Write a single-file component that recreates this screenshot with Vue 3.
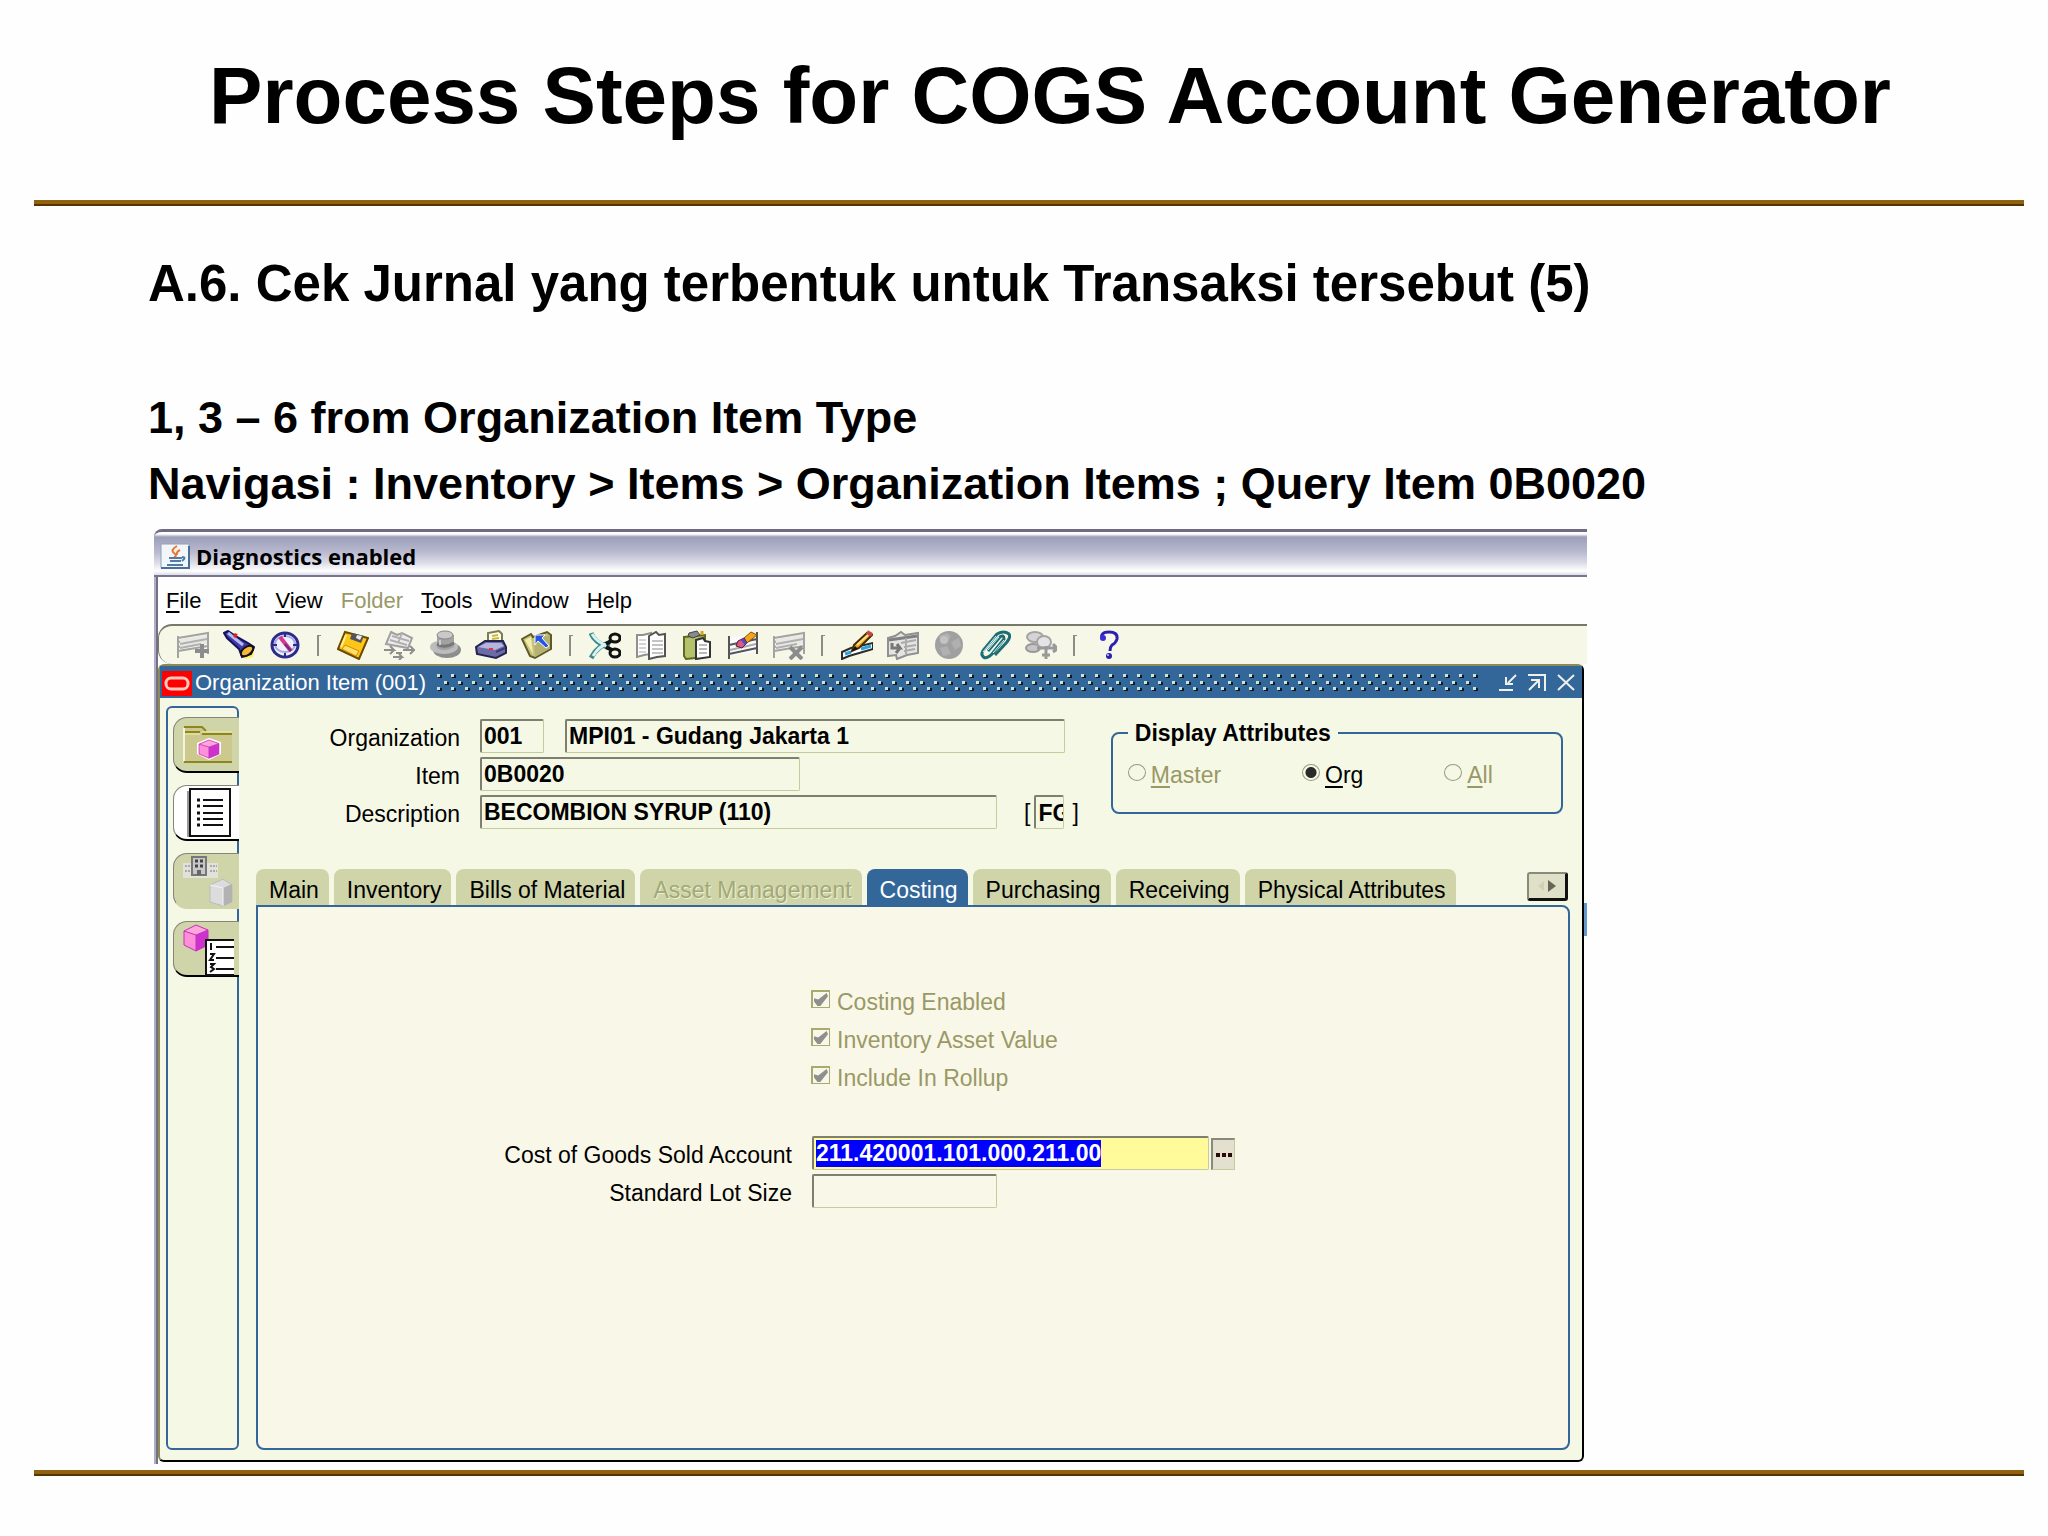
<script setup>
import { onMounted, ref } from 'vue'

const menus = [
  ['', 'F', 'ile'], ['', 'E', 'dit'], ['', 'V', 'iew'], ['Fo', 'l', 'der'],
  ['', 'T', 'ools'], ['', 'W', 'indow'], ['', 'H', 'elp'],
]

const grid = '<path d="M1 8 31 3V24M1 6V28M1 12 31 7M1 17 31 12M1 21 31 16" fill="none" stroke="#a3a3a3" stroke-width="2"/><path d="M3 9 30 5V14L3 19Z" fill="#e9e9e4"/><path d="M3 14 30 9M3 18 24 14" stroke="#b0b0b0" stroke-width="2"/>'

const icons = {
  new: grid + '<path d="M25 14V28M18 21H32" stroke="#8c8c8c" stroke-width="4"/>',
  find: '<path d="M20 24 31 20 30 27 22 29Z" fill="#fff04a"/><path d="M1 3 5 1 14 7 25 13 31 17 28 24 19 27 16 19 4 8Z" fill="#3c3ca4" stroke="#12125e" stroke-width="2"/><path d="M5 3 20 15" stroke="#b9b9f2" stroke-width="3"/><path d="M11 5 14 6" stroke="#e02020" stroke-width="4"/><ellipse cx="24" cy="21" rx="7" ry="4" transform="rotate(-35 24 21)" fill="#f6b83a" stroke="#111" stroke-width="2"/>',
  navigator: '<ellipse cx="16" cy="15" rx="13" ry="12" fill="#f1f1fb" stroke="#2b2b8c" stroke-width="3"/><ellipse cx="16" cy="14" rx="10" ry="8" fill="none" stroke="#a8a8e6" stroke-width="2"/><path d="M16 3V7M16 23V27M3 15H8M24 15H29" stroke="#2b2b8c" stroke-width="2"/><path d="M11 7 22 21" stroke="#d8388c" stroke-width="4"/><path d="M16 14 22 21" stroke="#6a2c7c" stroke-width="2"/>',
  save: '<path d="M8 2 31 8 22 29 1 19Z" fill="#ffc61a" stroke="#6b4a00" stroke-width="2"/><path d="M15 3 27 6 24 13 13 9Z" fill="#555"/><path d="M20 5 25 6 23 10 19 8Z" fill="#eee"/><path d="M8 15 22 21 19 26 5 19Z" fill="#ffe169" stroke="#d88a00"/><path d="M9 5 4 17" stroke="#fff08a" stroke-width="2"/>',
  next: '<path d="M8 2 14 5 19 3 29 8 25 18 3 14Z" fill="#ececec" stroke="#a0a0a0" stroke-width="2"/><path d="M9 6 26 11M7 10 24 15M19 3 15 13" fill="none" stroke="#b0b0b0" stroke-width="2"/><path d="M1 20H11L7 16M11 20 7 24M13 23H19M20 20H31L27 16M31 20 27 24M10 27H19L16 24M19 27 16 30" fill="none" stroke="#8e8e8e" stroke-width="2"/>',
  hat: '<ellipse cx="18" cy="20" rx="14" ry="8" fill="#8d8d8d"/><ellipse cx="15" cy="17" rx="14" ry="7" fill="#bcbcbc"/><path d="M8 5V18Q16 23 25 17V5Z" fill="#a2a2a2"/><ellipse cx="16" cy="5" rx="8" ry="4" fill="#c9c9c9" stroke="#888"/><path d="M8 14Q16 19 25 13" fill="none" stroke="#777" stroke-width="3"/><path d="M11 10V15" stroke="#ccc" stroke-width="2"/>',
  print: '<path d="M13 13V3L24 1 27 4V14Z" fill="#fffef0" stroke="#7b7b50" stroke-width="2"/><path d="M17 6 23 5M17 9 24 8" stroke="#c6b93c" stroke-width="2"/><path d="M1 17 10 11H28L31 17V23L21 28 2 24Z" fill="#6b6ba6" stroke="#23234e" stroke-width="2"/><path d="M3 17 11 13H26L29 16 20 20Z" fill="#b4b4de"/><path d="M14 19H18" stroke="#e33" stroke-width="2"/><path d="M21 22 30 18" stroke="#3b3b77" stroke-width="2"/>',
  close: '<path d="M1 9 10 4 12 7 26 2 30 5V19L14 28 9 26Z" fill="#c9c47b" stroke="#5e5a28" stroke-width="2"/><path d="M13 10 29 5V18L14 27Z" fill="#b5b172"/><path d="M4 10 10 7 12 24Z" fill="#efecae"/><path d="M14 5H24L21 8 28 16 25 18 17 11 14 15Z" fill="#2455e6" stroke="#fff"/>',
  cut: '<path d="M2 3Q5 12 20 18M2 28Q10 14 21 13" fill="none" stroke="#3a8a8a" stroke-width="5"/><path d="M3 4Q8 12 18 16M4 26Q10 16 18 14" fill="none" stroke="#d9f2f0" stroke-width="3"/><ellipse cx="26" cy="8" rx="5" ry="4" fill="none" stroke="#111" stroke-width="3"/><ellipse cx="26" cy="23" rx="5" ry="4" fill="none" stroke="#111" stroke-width="3"/><path d="M17 14 22 11M17 17 23 20" stroke="#111" stroke-width="4"/>',
  copy: '<path d="M2 5H8L16 3V24L9 25 2 27Z" fill="#fff" stroke="#909090" stroke-width="2"/><path d="M4 10H11M4 14H11M4 18H11M4 22H11" stroke="#aaa" stroke-width="1"/><path d="M14 6 21 2 24 5 30 4V26L22 27 14 29Z" fill="#fff" stroke="#555" stroke-width="2"/><path d="M17 11H28M17 15H28M17 19H28M17 23H28" stroke="#888"/>',
  paste: '<path d="M3 7 24 5V27L5 29 3 26Z" fill="#b5c26c" stroke="#5e6a20" stroke-width="2"/><path d="M8 3 16 1 19 5 12 8 7 6Z" fill="#8a8a8a" stroke="#444"/><path d="M21 1V5" stroke="#e0a020" stroke-width="3"/><path d="M15 10 22 8 24 11 29 12V27L15 29Z" fill="#fff" stroke="#333" stroke-width="2"/><path d="M18 15H26M18 19H26M18 23H26" stroke="#777"/>',
  clear: '<path d="M2 8 30 3V22L2 26Z" fill="#fafafa"/><path d="M2 6V29M30 2V24M2 15 30 9M2 24 30 18" stroke="#555" stroke-width="2"/><path d="M3 20 29 14" stroke="#aaa" stroke-width="2"/><path d="M17 8 24 2 30 5 20 13Z" fill="#f2a420" stroke="#8a5200"/><path d="M11 11 17 8 20 13 15 18 9 16Z" fill="#d85a86" stroke="#5a1a36"/><path d="M15 9 19 14" stroke="#4c4cc0" stroke-width="3"/>',
  delete: grid + '<path d="M17 17 29 29M29 17 17 29" stroke="#8c8c8c" stroke-width="4"/>',
  edit: '<path d="M1 22 10 18 32 13V19L8 26 1 29Z" fill="#fff" stroke="#2b2b2b" stroke-width="2"/><path d="M4 24 10 22M20 19 30 16" stroke="#2aa3e0" stroke-width="3"/><path d="M13 15 26 3 31 5 18 18 11 21Z" fill="#f0a020" stroke="#4a2c00" stroke-width="2"/><path d="M26 2 31 5" stroke="#c04848" stroke-width="4"/><path d="M16 15 27 5" stroke="#ffe08a" stroke-width="2"/><path d="M11 21 14 16 17 19Z" fill="#111"/>',
  zoomrows: '<path d="M1 8 8 6 14 2 18 5 31 3V23L20 25 10 29 9 25 1 26Z" fill="#e4e4e2" stroke="#909090" stroke-width="2"/><path d="M2 10 30 6" stroke="#808080" stroke-width="3"/><path d="M14 13 29 10M17 17 29 15M17 21 28 19M19 8V24" stroke="#aaa" stroke-width="2"/><path d="M5 13V18H13L10 14M13 18 9 23" fill="none" stroke="#777" stroke-width="3"/>',
  globe: '<circle cx="16" cy="15" r="14" fill="#a0a0a0"/><path d="M6 6 14 3 18 6 15 12 8 13ZM18 12 26 8 28 16 22 20ZM7 18 14 16 18 24 10 26Z" fill="#b0b0b0"/><circle cx="11" cy="10" r="4" fill="#c2c2c2"/>',
  attach: '<path d="M9 21 21 7Q25 4 25 9L13 24Q6 31 3 25Q2 22 7 17L18 4Q25 0 30 4Q32 7 28 12L16 25" fill="none" stroke="#1d6e74" stroke-width="3"/><path d="M9 20 20 7M14 23 25 10M4 22 17 6" fill="none" stroke="#d4f4f4" stroke-width="1"/>',
  translate: '<ellipse cx="10" cy="7" rx="8" ry="5" fill="#d4d4d4" stroke="#a4a4a4" stroke-width="2"/><ellipse cx="8" cy="18" rx="7" ry="4" fill="#c6c6c6" stroke="#999" stroke-width="2"/><ellipse cx="19" cy="12" rx="7" ry="6" fill="#e4e4e4" stroke="#a4a4a4" stroke-width="2"/><path d="M12 18H32L28 14M32 19 28 22M21 16V29M17 25H25" fill="none" stroke="#999" stroke-width="3"/>',
  help: '<path d="M9 9Q7 2 16 2Q25 2 24 9Q23 13 19 15Q17 17 17 21" fill="none" stroke="#2a1fb0" stroke-width="3"/><circle cx="10" cy="8" r="3" fill="#3a2fd8"/><circle cx="16" cy="26" r="3" fill="#2a1fb0"/><circle cx="15" cy="25" r="1" fill="#cfcfff"/>',
}

const toolbar = [
  ['new', 'New'], ['find', 'Find'], ['navigator', 'Show Navigator'], null,
  ['save', 'Save'], ['next', 'Next Step'], ['hat', 'Switch Responsibility'], ['print', 'Print'], ['close', 'Close Form'], null,
  ['cut', 'Cut'], ['copy', 'Copy'], ['paste', 'Paste'], ['clear', 'Clear Record'], ['delete', 'Delete'], null,
  ['edit', 'Edit Field'], ['zoomrows', 'Zoom'], ['globe', 'Translations'], ['attach', 'Attachments'], ['translate', 'Folder Tools'], null,
  ['help', 'Help'],
]

const cube = (x, y) => `<g transform="translate(${x} ${y})"><path d="M0 6 12 0 24 5V20L12 26 0 20Z" fill="#ff8fd8"/><path d="M12 10 24 5V20L12 26Z" fill="#cc33cc"/><path d="M0 6 12 0 24 5 12 10Z" fill="#ffa6dc"/><path d="M0 6 12 0 24 5V20L12 26 0 20ZM0 6 12 10 24 5M12 10V26" fill="none" stroke="#c531b8"/></g>`

const sideTabs = [
  { label: 'Folder', svg: '<path d="M2 9H20L24 14H50V44H2Z" fill="#cdc88e"/><path d="M2 9H20L24 13M2 14H18M20 16H50M2 44H50" fill="none" stroke="#8a8620" stroke-width="2"/><path d="M2 16H18M20 14H50" stroke="#f2f0a0"/><path d="M2 10V43" stroke="#f4f4d8" stroke-width="2"/><path d="M15 25 27 20 39 24V36L27 42 15 36Z" fill="#fff"/><g transform="translate(17 22) scale(.83 .7)">' + cube(0, 0) + '</g>' },
  { label: 'Details', active: true, svg: '<path d="M5 5H9V51H5Z" fill="#999"/><rect x="8" y="3" width="40" height="47" fill="#fff" stroke="#111" stroke-width="2"/><path d="M15 14H18M15 20H18M15 27H18M15 33H18M15 39H18" stroke="#111" stroke-width="3"/><path d="M21 14H41M21 20H41M21 27H41M21 33H41M21 39H41" stroke="#111" stroke-width="2"/>' },
  { label: 'Organization Assignment', disabled: true, svg: '<path d="M1 9H36V24H1Z" fill="#e2e2da"/><path d="M3 12H8M3 17H8M28 12H35M28 17H35" stroke="#aaa" stroke-width="2" stroke-dasharray="2 1"/><rect x="10" y="3" width="14" height="18" fill="#c8c8c8" stroke="#777" stroke-width="2"/><path d="M13 7H16M18 7H21M13 12H16M18 12H21" stroke="#444" stroke-width="3"/><path d="M15 21V16H19V21" fill="#666"/><path d="M28 31 41 25 50 31V48L41 52 28 48Z" fill="#dcdcdc" stroke="#bbb"/><path d="M41 34 50 30V48L41 52Z" fill="#b2b2b2"/><path d="M28 31 41 34V52" fill="none" stroke="#f4f4f4"/>' },
  { label: 'Item Revisions', svg: cube(2, 3) + '<rect x="24" y="18" width="30" height="35" fill="#fff" stroke="#111" stroke-width="2"/><path d="M29 21V28M34 25H52M28 32H32L28 38H32M34 36H52M28 42H32L29 45 32 47 28 50M34 47H52" fill="none" stroke="#111" stroke-width="2"/>' },
]

const tabs = [
  { label: 'Main' }, { label: 'Inventory' }, { label: 'Bills of Material' },
  { label: 'Asset Management', disabled: true }, { label: 'Costing', active: true },
  { label: 'Purchasing' }, { label: 'Receiving' }, { label: 'Physical Attributes' },
]

const checks = ['Costing Enabled', 'Inventory Asset Value', 'Include In Rollup']

const account = ref(null)
onMounted(() => {
  account.value.focus()
  account.value.select()
})
</script>

<template>
  <main class="slide">
    <h1 class="title">Process Steps for COGS Account Generator</h1>
    <div class="rule"></div>
    <section class="notes">
      <h2>A.6. Cek Jurnal yang terbentuk untuk Transaksi tersebut (5)</h2>
      <p>1, 3 – 6 from Organization Item Type</p>
      <p>Navigasi : Inventory &gt; Items &gt; Organization Items ; Query Item 0B0020</p>
    </section>

    <section class="app">
      <header class="titlebar">
        <svg width="30" height="26" viewBox="0 0 30 26" aria-hidden="true">
          <rect x="1" y="1" width="28" height="24" rx="1" fill="#f2f5f9" stroke="#8ea2b8" />
          <path d="M1 25H29V3" fill="none" stroke="#4d6f96" stroke-width="2" />
          <path d="M17 3Q10 7 14 10T14 14M20 7Q16 9 17 12" fill="none" stroke="#e8762c" stroke-width="2" />
          <path d="M9 15H22M10 18H21M7 22H23M22 14Q27 14 22 18" fill="none" stroke="#4f7ba6" stroke-width="2" />
        </svg>
        <span>Diagnostics enabled</span>
      </header>

      <div class="client">
        <nav class="menubar">
          <button v-for="(m, i) in menus" :key="i" type="button" :disabled="i === 3">{{ m[0] }}<u>{{ m[1] }}</u>{{ m[2] }}</button>
        </nav>

        <div class="toolbar">
          <template v-for="(t, i) in toolbar" :key="i">
            <button v-if="t" type="button" :aria-label="t[1]">
              <svg width="32" height="30" viewBox="0 0 32 30" v-html="icons[t[0]]"></svg>
            </button>
            <span v-else class="sep"></span>
          </template>
        </div>

        <div class="form-window">
          <div class="form-title">
            <svg class="logo" width="30" height="25" viewBox="0 0 30 25" aria-hidden="true">
              <rect width="30" height="25" fill="#f00" />
              <rect x="4" y="7" width="22" height="11" rx="5" fill="none" stroke="#ffc9c0" stroke-width="3" />
            </svg>
            <span>Organization Item (001)</span>
            <svg class="grip" height="20" aria-hidden="true">
              <defs>
                <pattern id="grip-dots" width="14" height="20" patternUnits="userSpaceOnUse">
                  <path d="M2 2H6V5H2ZM2 15H6V18H2ZM9 9H13V12H9Z" fill="#0a1a26" />
                  <path d="M1 1H4V4H1ZM1 14H4V17H1ZM8 8H11V11H8Z" fill="#cfe3d2" />
                </pattern>
              </defs>
              <rect width="100%" height="20" fill="url(#grip-dots)" />
            </svg>
            <div class="controls">
              <button type="button" aria-label="Minimize"><svg width="20" height="20" viewBox="0 0 20 20"><path d="M1 17H15M18 2 10 10M8 4V11H15" /></svg></button>
              <button type="button" aria-label="Maximize"><svg width="20" height="20" viewBox="0 0 20 20"><path d="M1 2H18V18M2 17 11 8M4 7H12V15" /></svg></button>
              <button type="button" aria-label="Close"><svg width="20" height="20" viewBox="0 0 20 20"><path d="M2 2 18 17M18 2 2 17" /></svg></button>
            </div>
          </div>

          <div class="form-body">
            <aside class="side">
              <button v-for="s in sideTabs" :key="s.label" type="button" :aria-label="s.label" :disabled="s.disabled" :class="{ active: s.active }">
                <svg width="52" height="54" viewBox="0 0 52 54" v-html="s.svg"></svg>
              </button>
            </aside>

            <div class="main">
              <div class="head">
                <div class="rows">
                  <div class="row">
                    <label for="org">Organization</label>
                    <input id="org" class="field w-code" value="001" readonly>
                    <input class="field w-org" value="MPI01 - Gudang Jakarta 1" aria-label="Organization name" readonly>
                  </div>
                  <div class="row">
                    <label for="item">Item</label>
                    <input id="item" class="field w-item" value="0B0020" readonly>
                  </div>
                  <div class="row">
                    <label for="desc">Description</label>
                    <input id="desc" class="field w-desc" value="BECOMBION SYRUP (110)" readonly>
                    <div class="flex">
                      <span>[</span>
                      <input class="field w-flex" value="FG" aria-label="Descriptive flexfield" readonly>
                      <span>]</span>
                    </div>
                  </div>
                </div>

                <fieldset class="display">
                  <legend>Display Attributes</legend>
                  <label class="off"><input type="radio" name="display" disabled><span><u>M</u>aster</span></label>
                  <label><input type="radio" name="display" checked><span><u>O</u>rg</span></label>
                  <label class="off"><input type="radio" name="display" disabled><span><u>A</u>ll</span></label>
                </fieldset>
              </div>

              <div class="tabs" role="tablist">
                <button v-for="t in tabs" :key="t.label" type="button" role="tab" :disabled="t.disabled" :class="{ active: t.active }">{{ t.label }}</button>
                <button type="button" class="scroll" aria-label="Scroll tabs">
                  <svg width="20" height="14" viewBox="0 0 20 14"><path d="M7 2V12L1 7Z" fill="#cfd0b4" /><path d="M11 1V13L19 7Z" fill="#666658" /></svg>
                </button>
              </div>

              <div class="panel">
                <div class="checks">
                  <label v-for="c in checks" :key="c"><input type="checkbox" checked disabled>{{ c }}</label>
                </div>
                <div class="rows">
                  <div class="row">
                    <label for="cogs">Cost of Goods Sold Account</label>
                    <input id="cogs" ref="account" class="field w-account" value="211.420001.101.000.211.00">
                    <button type="button" class="lov" aria-label="List of values">
                      <svg width="16" height="4" viewBox="0 0 16 4"><path d="M0 0H4V4H0ZM6 0H10V4H6ZM12 0H16V4H12Z" fill="#2a0a0a" /></svg>
                    </button>
                  </div>
                  <div class="row">
                    <label for="lot">Standard Lot Size</label>
                    <input id="lot" class="field w-lot" value="">
                  </div>
                </div>
              </div>
            </div>
          </div>
        </div>
        <span class="behind"></span>
      </div>
    </section>
    <div class="rule"></div>
  </main>
</template>

<style>
body {
  margin: 0;
  background: #fefefe;
}
</style>

<style scoped>
.slide {
  padding: 48px 24px 58px 34px;
  font-family: "Liberation Sans", Arial, sans-serif;
  color: #000;
}
.slide * { box-sizing: border-box; }
button, input { font: inherit; color: inherit; margin: 0; }
button { padding: 0; border: 0; background: none; }
svg { display: block; flex: none; }
u { text-underline-offset: 3px; text-decoration-thickness: 2px; }

.title {
  margin: 0 0 56px 42px;
  font-size: 80px;
  line-height: 96px;
  text-align: center;
}
.rule {
  height: 6px;
  background: linear-gradient(#8f6212 0 4px, #563300 4px 6px);
}
.notes {
  padding: 48px 0 12px 114px;
  font-weight: bold;
}
.notes h2 { margin: 0 0 71px; font-size: 51px; line-height: 60px; }
.notes p { margin: 0; font-size: 45px; line-height: 66px; }

.app {
  width: 72%;
  margin: 0 0 6px 120px;
  font-size: 23px;
}
.titlebar {
  display: flex;
  align-items: center;
  gap: 6px;
  height: 48px;
  padding: 4px 6px 0;
  border-top: 3px solid #6f6b84;
  border-bottom: 2px solid #77758f;
  border-top-left-radius: 8px;
  background: linear-gradient(#fff 0 2px, #9c9fb8 5px, #b9bad0 20px, #d9d9e6 30px, #fff 39px, #dcdce8 43px);
  font: bold 22px "Open Sans", "Noto Sans", sans-serif;
}
.client {
  position: relative;
  padding: 0 3px 2px 2px;
  border-left: 2px solid #b0adc8;
  background: linear-gradient(90deg, #73717f 2px, #fefefe 2px);
}
.menubar {
  display: flex;
  gap: 18px;
  height: 47px;
  padding: 0 8px;
  font-size: 22px;
}
.menubar button:disabled { color: #999966; }

.toolbar {
  display: flex;
  align-items: center;
  height: 40px;
  margin-right: -3px;
  padding-left: 11px;
  border: solid #77776a;
  border-width: 2px 0 0 1px;
  border-radius: 14px 0 0 14px;
  background: #f7f7e8;
}
.toolbar button {
  display: flex;
  justify-content: center;
  width: 46px;
}
.sep {
  width: 4px;
  height: 21px;
  margin: 0 9px;
  border: solid #8c8c84;
  border-width: 1px 0 0 2px;
}

.form-window {
  border: 2px solid #8d8a55;
  border-right-color: #000;
  border-bottom-color: #000;
  border-radius: 6px;
  background: #f6f8e6;
}
.form-title {
  display: flex;
  align-items: center;
  height: 32px;
  padding: 2px 6px 0 2px;
  background: #336699;
  color: #fff;
  font-size: 22px;
}
.form-title .logo { margin-right: 3px; }
.grip { flex: 1; min-width: 0; margin: 0 18px 0 10px; }
.controls { display: flex; gap: 9px; }
.controls path { fill: none; stroke: #f0f0ea; stroke-width: 2; }

.form-body {
  display: flex;
  gap: 17px;
  padding: 8px 12px 10px 6px;
}
.side {
  display: flex;
  flex-direction: column;
  gap: 12px;
  width: 73px;
  padding: 9px 0 0 5px;
  border: 2px solid #336699;
  border-radius: 6px;
}
.side button {
  display: flex;
  align-items: center;
  justify-content: flex-end;
  height: 56px;
  margin-right: -2px;
  padding-right: 5px;
  border: solid #85857a;
  border-width: 1px 0 2px 1px;
  border-bottom-color: #000;
  border-radius: 14px 0 0 14px;
  background: #cfd5a9;
}
.side button.active { background: #fff; }
.side button:disabled { border-bottom-color: #cfd5a9; }

.main { flex: 1; min-width: 0; padding-top: 13px; }
.head {
  display: flex;
  justify-content: space-between;
  align-items: flex-start;
}
.rows { display: flex; flex-direction: column; gap: 4px; }
.row { display: flex; height: 34px; }
.row > label {
  width: 204px;
  margin-right: 20px;
  line-height: 38px;
  text-align: right;
}
.field {
  height: 34px;
  padding: 0 2px;
  border: solid #7f7f70;
  border-width: 2px 1px 1px 2px;
  border-right-color: #c6cb9c;
  border-bottom-color: #c6cb9c;
  border-radius: 2px;
  outline: 0;
  background: transparent;
  font-weight: bold;
}
.field::selection { background: #0000ff; color: #fff; }
.w-code { width: 64px; margin-right: 21px; }
.w-org { width: 500px; }
.w-item { width: 320px; }
.w-desc { width: 517px; margin-right: 27px; }
.w-flex { width: 30px; }
.w-account { width: 397px; margin-right: 2px; background: #fffb9a; }
.w-lot { width: 185px; }
.flex { display: flex; line-height: 36px; }
.flex .field { margin: 0 8px 0 4px; padding-right: 0; }

.display {
  display: flex;
  justify-content: space-between;
  width: 452px;
  height: 95px;
  margin: 0 7px 0 0;
  padding: 14px 68px 0 15px;
  border: 2px solid #336699;
  border-radius: 8px;
}
.display legend {
  padding: 0 7px;
  font-weight: bold;
  line-height: 28px;
}
.display label { display: flex; gap: 5px; height: 28px; line-height: 28px; }
.display .off { color: #999966; }
.display input {
  appearance: none;
  width: 18px;
  height: 17px;
  margin-top: 3px;
  border: 1px solid #999980;
  border-radius: 50%;
}
.display input:checked { background: radial-gradient(circle, #2a2a2a 5px, transparent 6px); }

.tabs {
  display: flex;
  gap: 5px;
  height: 36px;
  margin-top: 40px;
}
.tabs button {
  padding: 6px 10px 0 13px;
  border-radius: 8px 8px 0 0;
  background: #cfd5a9;
  line-height: 30px;
  white-space: nowrap;
}
.tabs button:disabled { color: #a3a878; text-shadow: 1px 1px #eef0d2; }
.tabs button.active { background: #336699; color: #fff; }
.tabs .scroll {
  display: flex;
  align-items: center;
  justify-content: center;
  width: 41px;
  height: 29px;
  margin: 3px 2px 0 auto;
  padding: 0;
  border: solid #8a8a7c;
  border-width: 2px 3px 3px 2px;
  border-right-color: #111;
  border-bottom-color: #111;
  border-radius: 3px;
  background: #dfe0c8;
}
.panel {
  padding: 76px 0 240px;
  border: 2px solid #336699;
  border-radius: 0 8px 8px 8px;
  background: #f9f7e8;
}
.checks {
  display: flex;
  flex-direction: column;
  margin: 0 0 39px 553px;
  color: #999966;
}
.checks label { display: flex; gap: 7px; line-height: 38px; }
.checks input {
  position: relative;
  appearance: none;
  width: 19px;
  height: 18px;
  margin-top: 7px;
  border: 1px solid #a8aa70;
  border-width: 2px 1px 1px 2px;
}
.checks input::after {
  content: "";
  position: absolute;
  inset: 1px;
  background: #8f8f8f;
  clip-path: polygon(0 40%, 30% 50%, 90% 0, 100% 25%, 45% 100%, 25% 100%, 0 65%);
}
.panel .row > label { width: 534px; }
.lov {
  display: flex;
  align-items: center;
  justify-content: center;
  width: 24px;
  height: 32px;
  margin-top: 2px;
  border: solid #8a8a7c;
  border-width: 2px 1px 1px 2px;
  border-right-color: #c6cb9c;
  border-bottom-color: #c6cb9c;
  background: #e4e0d0;
}
.behind {
  position: absolute;
  top: 326px;
  right: 0;
  width: 3px;
  height: 33px;
  background: #6699cc;
}
</style>
